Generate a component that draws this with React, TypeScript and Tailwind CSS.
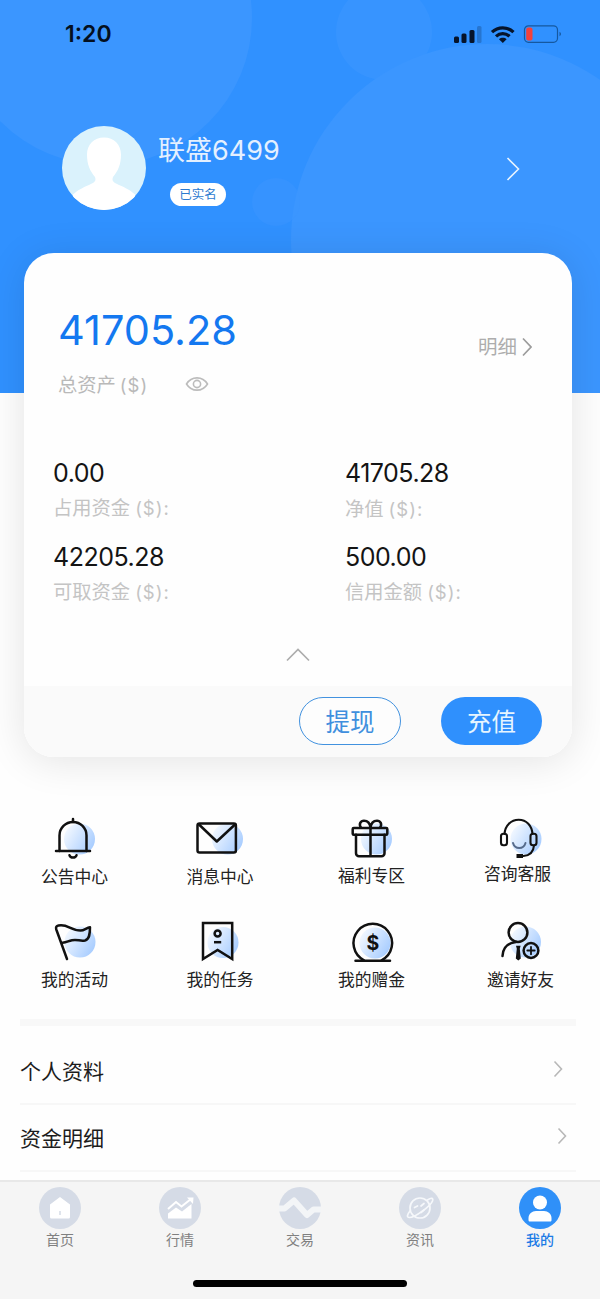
import React from 'react';

interface MenuItem {
  label: string;
  glow: [number, number];
  art: React.ReactNode;
  labelClass?: string;
}

interface TabItem {
  label: string;
  active?: boolean;
  art: React.ReactNode;
}

const FUNDS = [
  { value: '0.00', label: '占用资金', labelClass: '' },
  { value: '41705.28', label: '净值', labelClass: 'translate-y-px' },
  { value: '42205.28', label: '可取资金', labelClass: '' },
  { value: '500.00', label: '信用金额', labelClass: '' },
];

const MENU: MenuItem[] = [
  {
    label: '公告中心',
    glow: [29.5, 24],
    labelClass: 'translate-x-px',
    art: (
      <>
        <path d="M9.5 36V20.5a13.5 13.5 0 0 1 27 0V36" />
        <path d="M6 36h34M23 4V7M19.5 40.300c1 3 6 3 7 0" />
      </>
    ),
  },
  {
    label: '消息中心',
    glow: [31.5, 24],
    art: (
      <>
        <rect x="1.5" y="8.500" width="38.400" height="29" rx="2" />
        <path d="M3 9.500 20.800 26.500 39 9.500" />
      </>
    ),
  },
  {
    label: '福利专区',
    glow: [28.5, 24],
    labelClass: '-translate-y-px',
    art: (
      <>
        <rect x="4.700" y="13" width="34.600" height="6.800" rx="1" />
        <path d="M8 19.800v18.400a3 3 0 0 0 3 3h22.500a3 3 0 0 0 3-3V19.800M22.500 13v28" />
        <path d="M22.500 12.500c-.5-4-3-6.800-6.500-6.800-3.500 0-5.500 3.500-3 7M22.500 12.500c.5-4 3-6.800 6.500-6.800 3.500 0 5.500 3.500 3 7" />
      </>
    ),
  },
  {
    label: '咨询客服',
    glow: [30, 24],
    labelClass: '-translate-x-0.5 -translate-y-[3px]',
    art: (
      <>
        <g strokeWidth="2.1">
          <path d="M8.500 19C9 10.500 15 4.700 22.700 4.700S36 10.500 36.500 19" />
          <rect x="5" y="18.800" width="6" height="11.500" rx="2.500" />
          <rect x="34.500" y="18.800" width="6" height="11.500" rx="2.500" />
          <path d="M38 30.500c-.5 6-4 10-10.500 10.500" />
        </g>
        <path d="M20.500 41H27" strokeWidth="4" strokeLinecap="butt" />
        <path d="M17 28c2 6.700 10.500 6.700 12.500 0" stroke="#566b8c" strokeWidth="2" />
      </>
    ),
  },
  {
    label: '我的活动',
    glow: [30, 24],
    labelClass: 'translate-x-px',
    art: (
      <path d="M17 41 6.300 11.500C5.500 9 6.500 8 8.500 7.600c9-2 12 5 22 5 4 0 6-3 9.500-3.300 0 6.500-.5 12-5 13.200-5.500 1-7-1.500-13-.3-4 .8-5 2.300-9.500 2.600" />
    ),
  },
  {
    label: '我的任务',
    glow: [27, 24.5],
    art: (
      <>
        <path d="M7 5h29.200v36L21.600 32 7 41Z" strokeLinejoin="miter" />
        <circle cx="21.600" cy="15.500" r="3" />
        <path d="M18 24.200h7.200" strokeLinecap="butt" />
      </>
    ),
  },
  {
    label: '我的赠金',
    glow: [27, 25],
    art: (
      <>
        <path d="M16 42.300a19.300 19.300 0 1 1 17.600 0" />
        <path d="M7.500 42.700h34.500" />
        <text
          x="24.800"
          y="31.500"
          textAnchor="middle"
          fontSize="19.500"
          fontWeight="700"
          fill="#111"
          stroke="none"
          fontFamily="Inter, sans-serif"
        >
          $
        </text>
      </>
    ),
  },
  {
    label: '邀请好友',
    glow: [29.5, 24],
    labelClass: 'translate-x-px',
    art: (
      <>
        <circle cx="22" cy="14.500" r="9.400" />
        <path d="M6.500 38c.3-8 5-13 13.500-14" />
        <path d="M20 27.800h4.600l-.8 3 1 9.700-2.500 2-2.500-2 1-9.700Z" fill="#111" stroke="none" />
        <circle cx="35" cy="32.500" r="7.400" />
        <path d="M35 28.800v7.400M31.300 32.500h7.400" strokeWidth="1.800" />
      </>
    ),
  },
];

const TABS: TabItem[] = [
  {
    label: '首页',
    art: (
      <>
        <path d="m21 10 10 7.500V30a1.500 1.500 0 0 1-1.500 1.500h-17A1.500 1.500 0 0 1 11 30V17.500Z" fill="#fff" />
        <path d="M21 24v4" stroke="#d5dbe6" strokeWidth="1.500" />
      </>
    ),
  },
  {
    label: '行情',
    art: (
      <>
        <path d="m9 22 8-7 5.500 4.500L32 12" fill="none" stroke="#fff" strokeWidth="2" />
        <path d="m28 10.500 6.500 0-.5 6.500Z" fill="#fff" />
        <path d="m9 26.500 8-6 6 4 9.500-7.500v14.500H9Z" fill="#fff" />
      </>
    ),
  },
  {
    label: '交易',
    art: (
      <path
        d="M0 21.500h5.500l9.500-8 13 14.500 6.500-5.500H42"
        fill="none"
        stroke="#f3f5f7"
        strokeWidth="6"
        strokeLinejoin="round"
      />
    ),
  },
  {
    label: '资讯',
    art: (
      <g fill="none" stroke="#f6f8fb" strokeWidth="1.700" strokeLinecap="round">
        <circle cx="21" cy="21" r="10" />
        <path d="M28.500 13c4-2.800 6-2 5 1-1.800 5-17.500 16.500-23 16.500-3 0-2.500-2.800.5-6.500" />
        <path d="m15.500 20.500 3-1.500M22 19l3-2.500M22 25.500l3-2.500" />
      </g>
    ),
  },
  {
    label: '我的',
    active: true,
    art: (
      <>
        <circle cx="21" cy="15.500" r="7" fill="#fff" />
        <path d="M9.500 33v-2c0-4 3.500-7 7.500-7h8c4 0 7.500 3 7.500 7v2c0 1-.5 1.500-1.500 1.500H11c-1 0-1.500-.5-1.500-1.500Z" fill="#fff" />
      </>
    ),
  },
];

const StatusBar: React.FC = () => (
  <div className="relative flex h-[69px] items-center justify-between pl-[65px] pr-[38px]">
    <span className="text-[23px] font-semibold leading-none text-[#04101f]">1:20</span>
    <svg className="mb-px" width="108" height="20" viewBox="0 0 108 20" fill="#06142b">
      <rect x="0" y="12.500" width="5" height="6.500" rx="1.500" />
      <rect x="7.500" y="9.500" width="5" height="9.500" rx="1.500" />
      <rect x="15.500" y="6" width="5" height="13" rx="1.500" />
      <rect x="23" y="2" width="4.500" height="17" rx="1.500" opacity=".22" />
      <g fill="none" stroke="#06142b" strokeWidth="3.200">
        <path d="M38 8.200c6-5.800 15.500-5.800 21.500 0" />
        <path d="M42 12.300c4-3.700 9.500-3.700 13.500 0" />
      </g>
      <path d="M45 15.200c2.200-1.900 5.400-1.900 7.600 0L48.800 19Z" />
      <rect x="70.500" y="1.800" width="33" height="16.500" rx="4" fill="none" stroke="#15589f" strokeWidth="1.200" />
      <rect x="72.200" y="3.500" width="6.300" height="13" rx="2" fill="#f3413c" />
      <path d="M105.500 7.800c2 .8 2 3.600 0 4.500Z" fill="#15589f" />
    </svg>
  </div>
);

const Profile: React.FC = () => (
  <div className="relative mt-[57px] flex items-start pl-[62px] pr-[80px]">
    <svg width="84" height="84" viewBox="0 0 84 84">
      <defs>
        <clipPath id="avatar">
          <circle cx="42" cy="42" r="42" />
        </clipPath>
      </defs>
      <g clipPath="url(#avatar)">
        <rect width="84" height="84" fill="#daf2fc" />
        <path
          d="M42 11.500c-10 0-17 7-17 17 0 10 3 16.500 8 22.500 1.500 4-.5 5.500-6 8C20 62 16 64 11 68.500V84h62V68.500C68 64 64 62 57 59c-5.500-2.500-7.500-4-6-8 5-6 8-12.500 8-22.500 0-10-7-17-17-17Z"
          fill="#fff"
        />
      </g>
    </svg>
    <div className="ml-3 flex flex-col items-start">
      <h1 className="mt-[7px] text-[27px] leading-9 text-[#e4f0ff]">联盛6499</h1>
      <span className="ml-3 mt-[14px] flex h-[23px] w-[56px] items-center justify-center rounded-full bg-white pt-px text-[12.5px] text-[#2b7ad0]">
        已实名
      </span>
    </div>
    <svg className="ml-auto mt-[30px]" width="14" height="26" viewBox="0 0 14 26" fill="none" stroke="#e8f4ff" strokeWidth="1.600">
      <path d="m1.500 2 11 11-11 11" />
    </svg>
  </div>
);

const BalanceCard: React.FC = () => (
  <section className="relative mx-6 -mt-[140px] flex h-[504px] w-[548px] shrink-0 flex-col overflow-hidden rounded-[30px] bg-[#fefefe]">
    <div className="flex pl-[34px] pr-[40px] pt-[52px]">
      <div>
        <p className="text-[41.5px] leading-[50px] text-[#1478f0]">41705.28</p>
        <div className="mt-[17px] flex h-6 items-center text-[19.3px] leading-6 text-[#b9b9b9]">
          <span className="translate-y-px">总资产</span>
          <span className="ml-1 translate-y-px text-[18.5px] tracking-[1px]">($)</span>
          <svg className="ml-[37px]" width="24" height="16" viewBox="0 0 24 16" fill="none" stroke="#bcbcbc" strokeWidth="1.600">
            <path d="M1.500 8C6.500-.2 17.500-.2 22.500 8c-5 8.200-16 8.200-21 0Z" />
            <circle cx="12" cy="8" r="3.600" />
          </svg>
        </div>
      </div>
      <div className="ml-auto mt-[30px] flex h-6 items-center gap-[5px] text-[19.5px] leading-6 text-[#adadad]">
        明细
        <svg width="10" height="20" viewBox="0 0 10 20" fill="none" stroke="#9c9c9c" strokeWidth="1.700">
          <path d="m1 1.500 8 8.500-8 8.500" />
        </svg>
      </div>
    </div>

    <div className="mt-[61px] grid grid-cols-[292px_1fr] gap-y-[21px] pl-[29px]">
      {FUNDS.map(fund => (
        <div key={fund.label}>
          <p className="text-[25px] leading-8 tracking-[-0.5px] text-[#141414]">{fund.value}</p>
          <p className={`mt-[7px] text-[19.3px] leading-6 text-[#c4c4c4] ${fund.labelClass}`}>
            {fund.label}
            <span className="ml-[5px] text-[18.5px] tracking-[1px]">($):</span>
          </p>
        </div>
      ))}
    </div>

    <svg className="mx-auto mt-[44px]" width="24" height="14" viewBox="0 0 24 14" fill="none" stroke="#adadad" strokeWidth="1.700">
      <path d="M1 12.500 12 1.500l11 11" />
    </svg>

    <div className="mt-auto flex h-[71px] items-start justify-end gap-10 bg-[#fafafa] pr-[30px] pt-[11px] text-[24.5px]">
      <button className="h-12 w-[102px] rounded-full border border-[#4292df] bg-[#fdfdfd] pt-0.5 text-[#3f8fde]">提现</button>
      <button className="h-12 w-[101px] rounded-full bg-[#2f90fd] pt-0.5 text-[#e6f5ff]">充值</button>
    </div>
  </section>
);

const QuickMenu: React.FC = () => (
  <nav className="mt-[58px] grid grid-cols-[147px_146px_157px_139px] gap-y-[29px]">
    <svg width="0" height="0" className="absolute">
      <defs>
        <linearGradient id="glow" x1="0" y1="0.200" x2="1" y2="0.800">
          <stop offset="0" stopColor="#f6faff" />
          <stop offset="1" stopColor="#a3caff" />
        </linearGradient>
      </defs>
    </svg>
    {MENU.map(item => (
      <a key={item.label} className="flex flex-col items-center">
        <svg
          width="48"
          height="48"
          viewBox="0 0 48 48"
          fill="none"
          stroke="#111"
          strokeWidth="2.500"
          strokeLinecap="round"
          strokeLinejoin="round"
        >
          <circle cx={item.glow[0]} cy={item.glow[1]} r="15.500" fill="url(#glow)" stroke="none" />
          {item.art}
        </svg>
        <span className={`mt-0.5 text-[16.8px] leading-6 text-[#222] ${item.labelClass || ''}`}>{item.label}</span>
      </a>
    ))}
  </nav>
);

const ListRow: React.FC<{ label: string; className: string }> = ({ label, className }) => (
  <div className={`flex h-[67px] items-center border-b-2 border-[#f7f7f7] ${className}`}>
    <span className="pt-0.5 text-[21px] leading-8 text-[#1c1c1c]">{label}</span>
    <svg className="mb-[3px] ml-auto" width="10" height="18" viewBox="0 0 10 18" fill="none" stroke="#b8b8b8" strokeWidth="1.600">
      <path d="m1.500 1.500 7 7.500-7 7.500" />
    </svg>
  </div>
);

const TabBar: React.FC = () => (
  <footer className="mt-auto flex h-[119px] shrink-0 flex-col items-center border-t-2 border-[#e8e8e8] bg-[#f5f5f5]">
    <div className="flex w-full pt-[5px]">
      {TABS.map(tab => (
        <a key={tab.label} className="flex flex-1 flex-col items-center">
          <svg width="42" height="42" viewBox="0 0 42 42">
            <circle cx="21" cy="21" r="21" fill={tab.active ? '#2f90f8' : '#d5dbe6'} />
            {tab.art}
          </svg>
          <span className={`mt-px text-[14px] leading-5 ${tab.active ? 'font-medium text-[#1c7be6]' : 'text-[#808080]'}`}>
            {tab.label}
          </span>
        </a>
      ))}
    </div>
    <div className="mb-3 mt-auto h-[7px] w-[214px] rounded-full bg-black" />
  </footer>
);

const App: React.FC = () => (
  <div className="flex h-[1299px] w-[600px] flex-col overflow-hidden bg-[#fefefe] font-['Inter','Noto_Sans_CJK_SC',sans-serif]">
    <header className="relative h-[393px] shrink-0 bg-[#3091ff]">
      <svg className="absolute inset-0" width="600" height="393" viewBox="0 0 600 393" fill="#3b96ff">
        <circle cx="105" cy="18" r="147" />
        <circle cx="384" cy="32" r="48" opacity=".7" />
        <circle cx="487" cy="240" r="196" />
        <circle cx="276" cy="202" r="24" opacity=".5" />
      </svg>
      <StatusBar />
      <Profile />
    </header>
    <div className="relative flex flex-col">
      <div className="absolute left-6 top-[-140px] h-[504px] w-[548px] rounded-[30px] shadow-[0_4px_40px_rgba(0,0,0,0.11)]" />
      <BalanceCard />
    </div>
    <QuickMenu />
    <div className="ml-5 mr-6 mt-[27px] h-[7px] shrink-0 bg-[#f8f8f8]" />
    <div className="ml-5 mr-6 mt-3">
      <ListRow label="个人资料" className="pr-[13px]" />
      <ListRow label="资金明细" className="pr-[9px]" />
    </div>
    <TabBar />
  </div>
);

export default App;
